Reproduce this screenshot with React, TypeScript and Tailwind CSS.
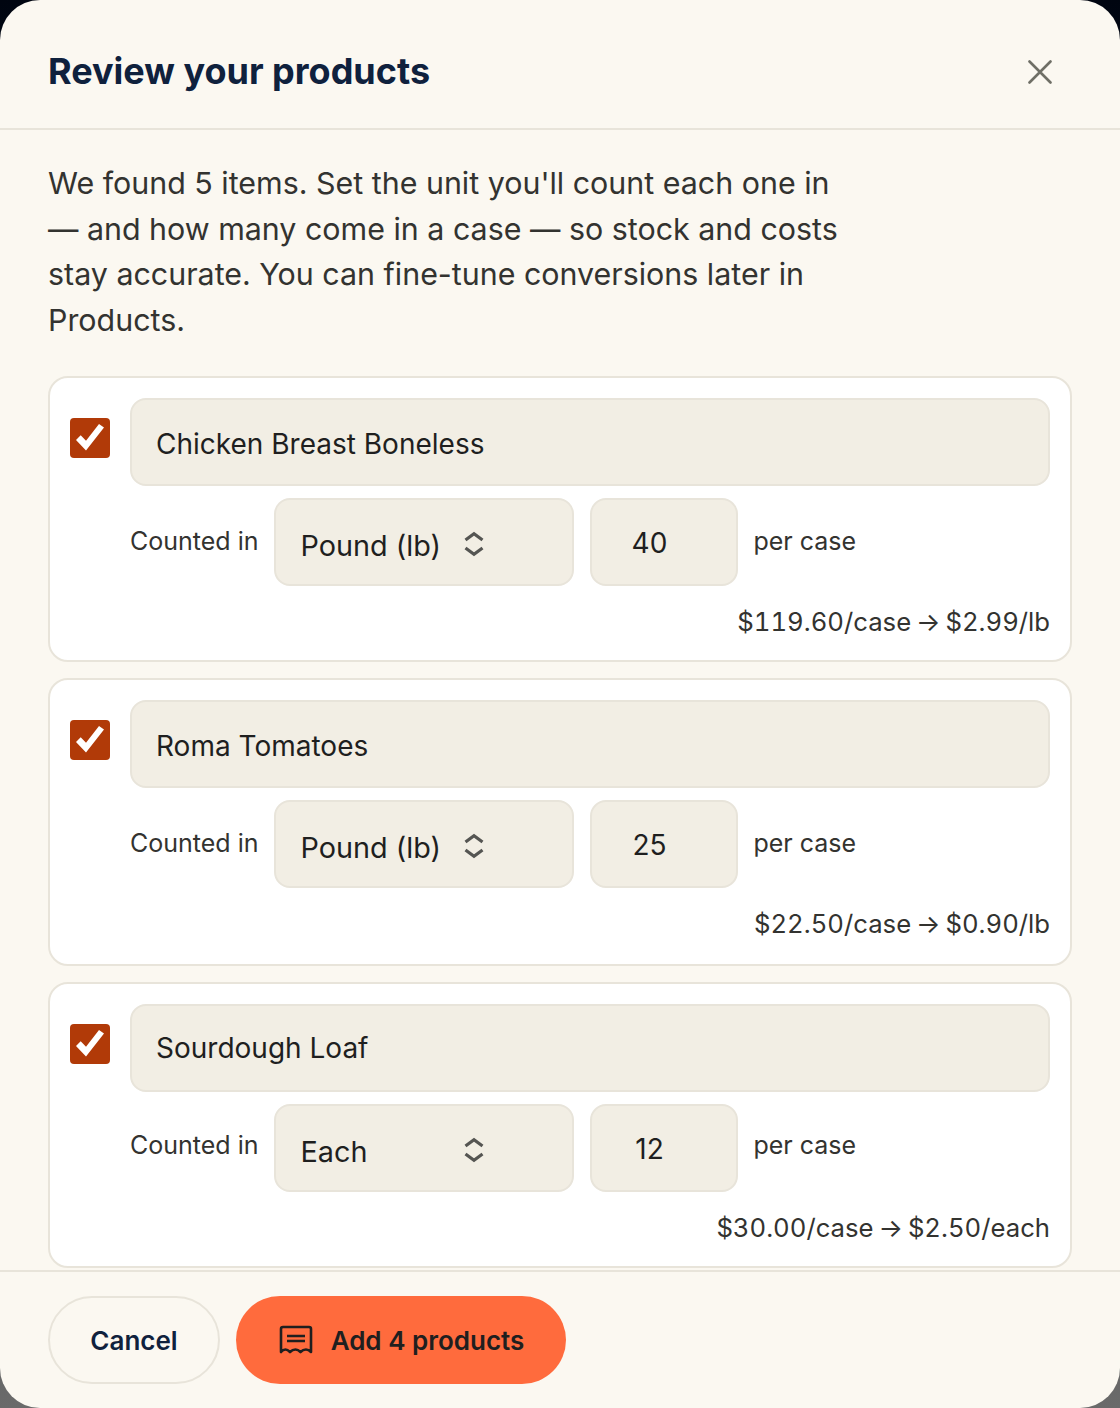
const products = [
  { name: "Chicken Breast Boneless", unit: "Pound (lb)", qty: "40", from: "$119.60/case", to: "$2.99/lb", height: "h-[286px]", namePad: "pt-1", labelPad: "mt-0" },
  { name: "Roma Tomatoes", unit: "Pound (lb)", qty: "25", from: "$22.50/case", to: "$0.90/lb", height: "h-[288px]", namePad: "pt-1", labelPad: "mt-0" },
  { name: "Sourdough Loaf", unit: "Each", qty: "12", from: "$30.00/case", to: "$2.50/each", height: "h-[286px]", namePad: "pt-0", labelPad: "-mt-1" },
];

function Check() {
  return (
    <div className="mt-5 flex h-10 w-10 shrink-0 items-center justify-center rounded-[4px] bg-[#b13a08]">
      <svg width="40" height="40" viewBox="0 0 40 40" fill="none">
        <polygon points="6,22 10.7,17.3 16,22.7 29,6 34,9.5 16,32.5" fill="#ffffff" />
      </svg>
    </div>
  );
}

function Card({ name, unit, qty, from, to, height, namePad, labelPad }: { name: string; unit: string; qty: string; from: string; to: string; height: string; namePad: string; labelPad: string }) {
  return (
    <div className={`flex ${height} shrink-0 gap-5 rounded-[20px] border-2 border-[#e8e4da] bg-white p-5`}>
      <Check />
      <div className="flex min-w-0 flex-1 flex-col">
        <div className={`flex h-[88px] shrink-0 items-center rounded-[16px] border-2 border-[#e8e4da] bg-[#f2eee4] px-6 ${namePad} text-[28px] text-[#1f1f1f]`}>
          {name}
        </div>
        <div className="mt-3 flex h-[88px] shrink-0 items-center gap-4">
          <span className={`${labelPad} text-[25px] text-[#333330]`}>Counted in</span>
          <div className="relative flex h-[88px] w-[300px] items-center rounded-[16px] border-2 border-[#e8e4da] bg-[#f2eee4] pl-6 pt-2 text-[28.8px] text-[#1f1f1f]">
            {unit}
            <svg className="absolute left-[186px] top-[30px]" width="24" height="28" viewBox="0 0 24 28" fill="none">
              <path d="M3.5 10 L12 3.8 L20.5 10 M3.5 18 L12 24.2 L20.5 18" stroke="#555552" strokeWidth="3.2" />
            </svg>
          </div>
          <div className="flex h-[88px] w-[148px] items-center justify-center rounded-[16px] border-2 border-[#e8e4da] bg-[#f2eee4] pr-[30px] pt-0.5 text-[28px] text-[#1f1f1f]">
            {qty}
          </div>
          <span className={`-ml-px ${labelPad} text-[25px] text-[#333330]`}>per case</span>
        </div>
        <div className="mt-4 text-right text-[25.7px] leading-[39px] tabular-nums text-[#333330]">
          {from} <span className="-mx-[2px] inline-block">→</span> {to}
        </div>
      </div>
    </div>
  );
}

export default function App() {
  return (
    <div
      className="h-[1408px] w-[1120px] overflow-hidden bg-gradient-to-b from-[#000510] to-[#6a6a6a]"
      style={{ fontFamily: "Inter, sans-serif" }}
    >
      <div className="flex h-full flex-col overflow-hidden rounded-[40px] bg-[#fbf8f1]">
        <div className="flex h-[130px] shrink-0 items-center justify-between border-b-2 border-[#e8e4da] pl-12 pr-[68px] pt-[14px]">
          <h1 className="text-[36px] font-bold text-[#0f213d]">Review your products</h1>
          <svg className="mt-0.5" width="24" height="24" viewBox="0 0 24 24" fill="none">
            <path d="M1.5 1.5 L22.5 22.5 M22.5 1.5 L1.5 22.5" stroke="#6f6f66" strokeWidth="2.6" strokeLinecap="round" />
          </svg>
        </div>
        <div className="flex min-h-0 flex-1 flex-col gap-4 overflow-hidden px-12 pt-[31px]">
          <p className="mb-[17px] w-[800px] text-[30.4px] leading-[45.5px] text-[#333330]">
            We found 5 items. Set the unit you'll count each one in — and how many come in a case — so stock and costs stay accurate. You can fine-tune conversions later in Products.
          </p>
          {products.map((p) => (
            <Card key={p.name} {...p} />
          ))}
        </div>
        <div className="flex h-[138px] shrink-0 items-center gap-4 border-t-2 border-[#e8e4da] px-12">
          <button className="flex h-[88px] w-[172px] items-center justify-center rounded-full border-2 border-[#e8e4da] text-[26px] font-semibold text-[#0f213d]">
            Cancel
          </button>
          <button className="flex h-[88px] w-[330px] items-center justify-center gap-[18px] rounded-full bg-[#ff6b3d] pl-px text-[26px] font-semibold text-[#1f1f1f]">
            <svg width="34" height="30" viewBox="0 0 34 30" fill="none">
              <path d="M2 27 V4 Q2 2 4 2 H30 Q32 2 32 4 V27 Q29.5 24.5 27 24.5 Q24 24.5 21.5 27 Q19 24.5 16.5 24.5 Q13.5 24.5 11 27 Q8.5 24.5 6.5 24.5 Q4 24.5 2 27 Z" stroke="#1f1f1f" strokeWidth="2.6" strokeLinejoin="round" />
              <path d="M8 11 H26 M8 16 H26" stroke="#1f1f1f" strokeWidth="2.6" />
            </svg>
            Add 4 products
          </button>
        </div>
      </div>
    </div>
  );
}
